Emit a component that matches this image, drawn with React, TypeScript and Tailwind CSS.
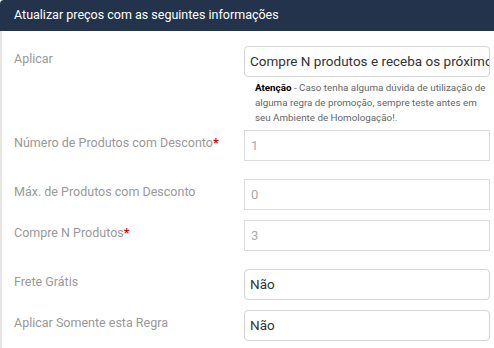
const FONT = { fontFamily: "Roboto, 'Open Sans', Arial, sans-serif" };

function Label({ text, required }: { text: string; required?: boolean }) {
  return (
    <div className="w-[228px] shrink-0 pl-[12px] pt-[3px] text-[12.5px] text-[#999] leading-[20px]">
      {text}
      {required && <span className="text-[#d00] font-bold">*</span>}
    </div>
  );
}

function Field({ value, disabled }: { value: string; disabled?: boolean }) {
  return (
    <div
      className={
        disabled
          ? "h-[31px] w-[246px] border border-[#dcdcdc] bg-white px-[6px] flex items-center text-[13px] text-[#aaa] overflow-hidden whitespace-nowrap"
          : "h-[31px] w-[246px] border border-[#d4d4d4] rounded-[4px] bg-white px-[5px] flex items-center text-[13.5px] text-[#333] overflow-hidden whitespace-nowrap"
      }
    >
      {value}
    </div>
  );
}

export default function App() {
  return (
    <div className="w-[494px] h-[348px] bg-white overflow-hidden" style={FONT}>
      {/* Header */}
      <div className="h-[31px] bg-[#22334b] rounded-tl-[4px] pl-[14px] flex items-center text-[12.5px] text-white">
        Atualizar preços com as seguintes informações
      </div>

      {/* Body */}
      <div className="border-l-2 border-[#e6e6e6] h-[317px] pt-[15px]">
        <div className="flex">
          <Label text="Aplicar" />
          <div className="pl-[14px]">
            <Field value="Compre N produtos e receba os próximos" />
            <p className="w-[246px] pl-[11px] pt-[3px] text-[9.8px] leading-[15px] text-[#666] whitespace-nowrap">
              <b className="text-black">Atenção</b> - Caso tenha alguma dúvida de utilização de
              <br />
              alguma regra de promoção, sempre teste antes em
              <br />
              seu Ambiente de Homologação!.
            </p>
          </div>
        </div>

        <div className="flex mt-[5px]">
          <Label text="Número de Produtos com Desconto" required />
          <div className="pl-[14px]">
            <Field value="1" disabled />
          </div>
        </div>

        <div className="flex mt-[18px]">
          <Label text="Máx. de Produtos com Desconto" />
          <div className="pl-[14px]">
            <Field value="0" disabled />
          </div>
        </div>

        <div className="flex mt-[10px]">
          <Label text="Compre N Produtos" required />
          <div className="pl-[14px]">
            <Field value="3" disabled />
          </div>
        </div>

        <div className="flex mt-[18px]">
          <Label text="Frete Grátis" />
          <div className="pl-[14px]">
            <Field value="Não" />
          </div>
        </div>

        <div className="flex mt-[10px]">
          <Label text="Aplicar Somente esta Regra" />
          <div className="pl-[14px]">
            <Field value="Não" />
          </div>
        </div>
      </div>
    </div>
  );
}
